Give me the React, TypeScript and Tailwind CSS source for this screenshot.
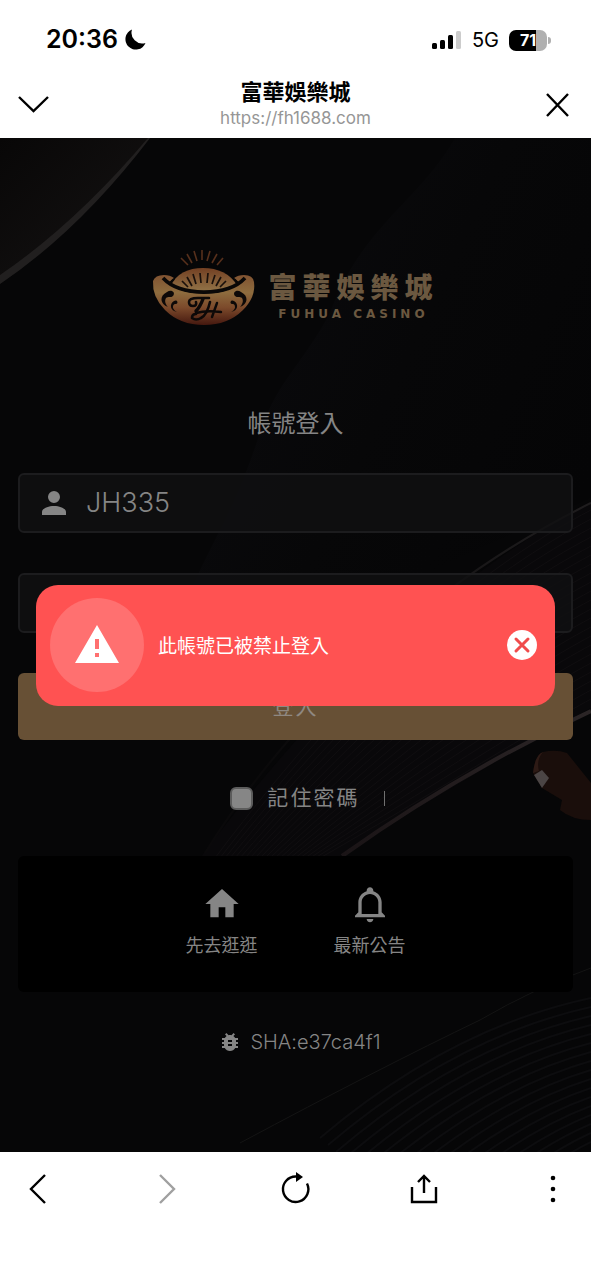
import type { ReactNode } from 'react';
import { MdBugReport } from 'react-icons/md';

// --- Reusable UI Components ---
const Icon = ({ d, className }: { d: string, className: string }) => (
    <svg viewBox="0 0 24 24" fill="currentColor" aria-hidden="true" className={className}><path d={d} /></svg>
);

const ToolbarButton = ({ label, className, children }: { label: string, className?: string, children: ReactNode }) => (
    <button type="button" aria-label={label} className={`flex size-10 items-center justify-center ${className || 'text-black'}`}>
        <svg viewBox="0 0 40 40" fill="none" stroke="currentColor" strokeWidth="2.4" className="size-10">{children}</svg>
    </button>
);

const paths = {
    account: 'M12,4A4,4 0 0,1 16,8A4,4 0 0,1 12,12A4,4 0 0,1 8,8A4,4 0 0,1 12,4M12,14C16.42,14 20,15.79 20,18V20H4V18C4,15.79 7.58,14 12,14Z',
    alert: 'M13,14H11V9H13M13,18H11V16H13M1,21H23L12,2L1,21Z',
    home: 'M10,20V14H14V20H19V12H22L12,3L2,12H5V20H10Z',
    bell: 'M10 21H14C14 22.1 13.1 23 12 23S10 22.1 10 21M21 19V20H3V19L5 17V11C5 7.9 7.03 5.17 10 4.29C10 4.19 10 4.1 10 4C10 2.9 10.9 2 12 2S14 2.9 14 4C14 4.1 14 4.19 14 4.29C16.97 5.17 19 7.9 19 11V17L21 19M17 11C17 8.24 14.76 6 12 6S7 8.24 7 11V18H17V11Z',
};

const shortcuts = [
    { label: '先去逛逛', icon: paths.home },
    { label: '最新公告', icon: paths.bell },
];

// --- Status bar and page title ---
const StatusBar = () => (
    <div className="flex h-20 items-center justify-between pl-[46px] pr-10">
        <div className="flex items-center gap-[6px]">
            <span className="text-[25px] font-semibold">20:36</span>
            <svg viewBox="0 0 22 22" className="size-[22px]"><path d="M8 0.5A10.400 10.400 0 1 0 21.500 14A10.800 10.800 0 0 1 8 0.5Z" /></svg>
        </div>
        <div className="flex items-center gap-[10px]">
            <svg viewBox="0 0 30 20" className="h-5 w-[30px]">
                <rect x="0" y="13" width="5" height="6" rx="1.5" />
                <rect x="8" y="10" width="5" height="9" rx="1.5" />
                <rect x="16" y="5" width="5" height="14" rx="1.5" />
                <rect x="24" y="1" width="5" height="18" rx="1.5" fill="#ccc" />
            </svg>
            <span className="text-xl">5G</span>
            <div className="flex items-center">
                <span className="flex h-[21px] w-[38px] items-center justify-center rounded-[7px] bg-linear-to-r from-black from-72% to-[#b0b0b0] to-72% text-base font-bold text-white">71</span>
                <span className="ml-px h-[7px] w-[3px] rounded-r-full bg-[#b0b0b0]" />
            </div>
        </div>
    </div>
);

const TitleBar = () => (
    <div className="flex h-[58px] items-start justify-between px-[14px]">
        <ToolbarButton label="收合"><path d="M5 17L19.500 31L34 17" /></ToolbarButton>
        <div className="text-center">
            <h1 className="text-[22px] leading-6 font-bold">富華娛樂城</h1>
            <p className="text-[17px] leading-7 text-[#969696]">https://fh1688.com</p>
        </div>
        <ToolbarButton label="關閉"><path d="M10 14L31 36M31 14L10 36" /></ToolbarButton>
    </div>
);

// --- Login page ---
const Backdrop = () => (
    <svg viewBox="0 0 591 1014" preserveAspectRatio="xMidYMid slice" aria-hidden="true" className="absolute inset-0 -z-10 size-full">
        <defs>
            <linearGradient id="fold" x1="0" y1="0" x2="1" y2="0.6">
                <stop offset="0" stopColor="#0c0c10" />
                <stop offset="0.6" stopColor="#070708" />
                <stop offset="1" stopColor="#050506" />
            </linearGradient>
            <linearGradient id="corner" x1="0" y1="0" x2="0.8" y2="0.8">
                <stop offset="0" stopColor="#080707" />
                <stop offset="1" stopColor="#131111" />
            </linearGradient>
            <linearGradient id="edge" x1="0" y1="1" x2="1" y2="0">
                <stop offset="0" stopColor="#1a1416" />
                <stop offset="1" stopColor="#2b2526" />
            </linearGradient>
            <linearGradient id="rim" x1="0" y1="1" x2="1" y2="0">
                <stop offset="0.2" stopColor="#0a090a" />
                <stop offset="1" stopColor="#1f1d1e" />
            </linearGradient>
        </defs>
        <rect width="591" height="1014" fill="#060607" />
        <path d="M455 0C420 62 360 90 330 175C300 230 275 245 258 300C230 390 180 450 150 560L591 360V0Z" fill="url(#fold)" />
        <path d="M0 0H150Q80 90 0 146Z" fill="url(#corner)" />
        <path d="M150 0Q80 92 0 146V137Q75 86 148 0Z" fill="#211f1f" />
        <path d="M591 363C480 425 350 520 200 720L340 718C440 655 520 610 591 570Z" fill="#09080a" />
        {Array.from({ length: 22 }, (_, i) => (
            <path key={i} d={`M591 ${372 + i * 9}C${490 + i * 2} ${425 + i * 8} ${365 + i * 4} ${520 + i * 6} ${215 + i * 5} 720`} fill="none" stroke="#100e10" />
        ))}
        <path d="M591 365C510 405 440 455 390 500C320 562 255 635 205 715" fill="none" stroke="url(#rim)" strokeWidth="2" />
        <path d="M591 573Q460 634 342 718" fill="none" stroke="url(#edge)" strokeWidth="4" />
        <path d="M342 718Q290 755 250 795" fill="none" stroke="#111" />
        <path d="M533 635Q535 617 543 614Q556 611 567 615L591 645V682Q572 682 560 672L562 662L542 650Z" fill="#1a0e0b" />
        <path d="M533 635Q535 617 543 614Q536 622 539 633Z" fill="#2d1a15" />
        <path d="M534 637L542 632L549 640L542 650Z" fill="#4b4545" />
        <path d="M480 882Q380 930 240 1005M591 830Q535 850 480 882" fill="none" stroke="#141414" />
        {Array.from({ length: 17 }, (_, i) => (
            <path key={i} d={`M591 ${860 + i * 9}Q${450 + i * 5} ${890 + i * 9} ${320 + i * 8} ${1000 + i * 7}`} fill="none" stroke="#0d0d0f" strokeWidth="2" />
        ))}
    </svg>
);

const IngotLogo = () => (
    <svg viewBox="0 0 104 76" aria-hidden="true" className="h-[76px] w-[104px]">
        <defs>
            <linearGradient id="gold" x1="0" y1="0" x2="0" y2="1">
                <stop offset="0" stopColor="#805231" />
                <stop offset="0.35" stopColor="#8e6c3e" />
                <stop offset="0.65" stopColor="#7c4a2b" />
                <stop offset="1" stopColor="#45180f" />
            </linearGradient>
            <linearGradient id="sun" x1="0" y1="0" x2="0" y2="1">
                <stop offset="0" stopColor="#734023" />
                <stop offset="1" stopColor="#94774a" />
            </linearGradient>
        </defs>
        <path d="M29 8L36 15M35 4L40 13M42 1L45 11M50 0V10M58 1L55 11M65 4L60 13M71 8L65 15" stroke="#57301c" strokeWidth="1.6" />
        <path d="M19 35Q28 18 51 18Q74 18 85 35Q70 43 52 43Q34 43 19 35Z" fill="url(#sun)" />
        <path d="M30 31L36 37M35 27L40 36M41 24L44 34M48 23L49 33M56 23L55 33M63 25L60 34M69 27L64 36M74 31L68 37" stroke="#1a100b" strokeWidth="1.7" />
        <path d="M1 31Q3 25 12 25Q18 25 22 28Q19 30 17 33Q30 44 52 44Q74 44 87 33Q85 30 82 28Q86 25 92 25Q101 25 102 32Q104 47 91 60Q76 75 52 75Q28 75 13 60Q0 47 1 31Z" fill="url(#gold)" />
        <path d="M11 28Q24 42 52 42Q80 42 93 28" fill="none" stroke="#0a0807" strokeWidth="3.6" />
        <path d="M22 29L17 34M82 29L87 34" stroke="#0a0807" strokeWidth="2" />
        <g fill="#0d0908">
            <path d="M15 42C19 39 24 42 21 46C19 48 16 46 14 48C12 51 14 55 16 57C8 54 7 46 15 42Z" />
            <path d="M22 51C25 49 27 53 24 54C21 54 21 56 21 58C22 60 23 61 25 62C18 61 17 54 22 51Z" />
            <path d="M89 42C85 39 80 42 83 46C85 48 88 46 90 48C92 51 90 55 88 57C96 54 97 46 89 42Z" />
            <path d="M82 51C79 49 77 53 80 54C83 54 83 56 83 58C82 60 81 61 79 62C86 61 87 54 82 51Z" />
        </g>
        {/* monogram flourish */}
        <g fill="none" stroke="#0d0908" strokeWidth="2.6" strokeLinecap="round" strokeLinejoin="round">
            <path d="M57 48H46Q37 48 37 52Q37 56 41 56Q45 56 44 52" />
            <path d="M51 49Q48 57 44 61" strokeWidth="3.4" />
            <path d="M58 52Q55 65 49 68Q44 71 40 68Q40 64 44 64" />
            <path d="M65 53L60 67M44 63Q54 60 69 62" strokeWidth="2.4" />
        </g>
    </svg>
);

const LoginForm = () => (
    <form onSubmit={(e) => e.preventDefault()} className="mt-[31px]">
        <div className="flex h-[60px] items-center gap-[14px] rounded-md border-2 border-[#1c1c1e] bg-[#101012]/80 px-4">
            <label htmlFor="account"><Icon d={paths.account} className="size-9" /></label>
            <input id="account" type="text" aria-label="帳號" defaultValue="JH335" className="min-w-0 flex-1 text-[27px] font-light outline-none" />
        </div>
        <div className="mt-10 flex h-[60px] items-center rounded-md border-2 border-[#1c1c1e] bg-[#101012]/80 px-4">
            <input id="password" type="password" aria-label="密碼" className="min-w-0 flex-1 outline-none" />
        </div>
        <button type="submit" className="mt-10 h-[67px] w-full rounded-md bg-[#675035] text-[21px] tracking-widest text-[#8f8881]">登入</button>
        <div className="mt-10 flex h-9 items-center justify-center pl-6">
            <label className="flex items-center gap-[14px] text-[21px] tracking-widest">
                <input type="checkbox" name="remember" className="size-[23px] appearance-none rounded-md border-2 border-[#5c5c5c] bg-[#868686]" />
                記住密碼
            </label>
            <span className="ml-6 h-[15px] w-px bg-[#707070]" />
        </div>
    </form>
);

const Toast = () => (
    <div className="absolute inset-0 flex items-center px-9">
        <div role="alert" className="flex h-[121px] w-full items-center gap-[14px] rounded-[22px] bg-[#ff5252] pr-[18px] pl-[14px] text-white">
            <span className="flex size-[94px] shrink-0 items-center justify-center rounded-full bg-[#ff7070]">
                <Icon d={paths.alert} className="size-12" />
            </span>
            <p className="flex-1 pt-1 text-[19px]">此帳號已被禁止登入</p>
            <button type="button" aria-label="關閉通知">
                <svg viewBox="0 0 30 30" className="size-[30px]">
                    <circle cx="15" cy="15" r="15" fill="#fff" />
                    <path d="M9 9L21 21M21 9L9 21" stroke="#f04c4c" strokeWidth="3" strokeLinecap="round" />
                </svg>
            </button>
        </div>
    </div>
);

// --- Main Component ---
export default function App() {
    return (
        <div className="flex min-h-screen flex-col bg-white font-['Inter','Noto_Sans_CJK_TC',sans-serif] text-black">
            <header>
                <StatusBar />
                <TitleBar />
            </header>

            <main className="relative isolate flex-1 overflow-hidden px-[18px] pt-28 pb-8 text-[#858585]">
                <Backdrop />
                <div className="flex items-center justify-center gap-3">
                    <IngotLogo />
                    <div className="pt-3 text-center text-[#6b5840]">
                        <p className="text-[28px] leading-10 font-black tracking-[6px]">富華娛樂城</p>
                        <p className="font-['DejaVu_Sans',sans-serif] text-xs leading-3 font-bold tracking-[4px]">FUHUA CASINO</p>
                    </div>
                </div>
                <h2 className="mt-20 text-center text-2xl leading-9 font-normal">帳號登入</h2>
                <LoginForm />
                <nav className="mt-10 flex h-[136px] items-center justify-center gap-[76px] rounded-md bg-black pb-1">
                    {shortcuts.map((item) => (
                        <a key={item.label} href="#" className="flex flex-col items-center gap-2">
                            <Icon d={item.icon} className="size-10" />
                            <span className="text-lg">{item.label}</span>
                        </a>
                    ))}
                </nav>
                <p className="mt-9 flex items-center justify-center gap-2 pl-2 text-xl font-light">
                    <MdBugReport className="size-6" />
                    SHA:e37ca4f1
                </p>
                <Toast />
            </main>

            <footer className="flex h-32 items-start justify-between px-[18px] pt-4">
                <ToolbarButton label="上一頁"><path d="M27 7L13 21L27 35" /></ToolbarButton>
                <ToolbarButton label="下一頁" className="text-[#a0a0a0]"><path d="M13 7L27 21L13 35" /></ToolbarButton>
                <ToolbarButton label="重新整理">
                    <path d="M20 8.500A12.700 12.700 0 1 0 31 15.500" />
                    <path d="M20 4L27 9L20 14Z" fill="currentColor" stroke="none" />
                </ToolbarButton>
                <ToolbarButton label="分享"><path d="M8 19V34H32V19M20 25V8M14 14L20 8L26 14" /></ToolbarButton>
                <ToolbarButton label="更多">
                    <g fill="currentColor" stroke="none"><circle cx="20" cy="10" r="2.300" /><circle cx="20" cy="21" r="2.300" /><circle cx="20" cy="32" r="2.300" /></g>
                </ToolbarButton>
            </footer>
        </div>
    );
}
